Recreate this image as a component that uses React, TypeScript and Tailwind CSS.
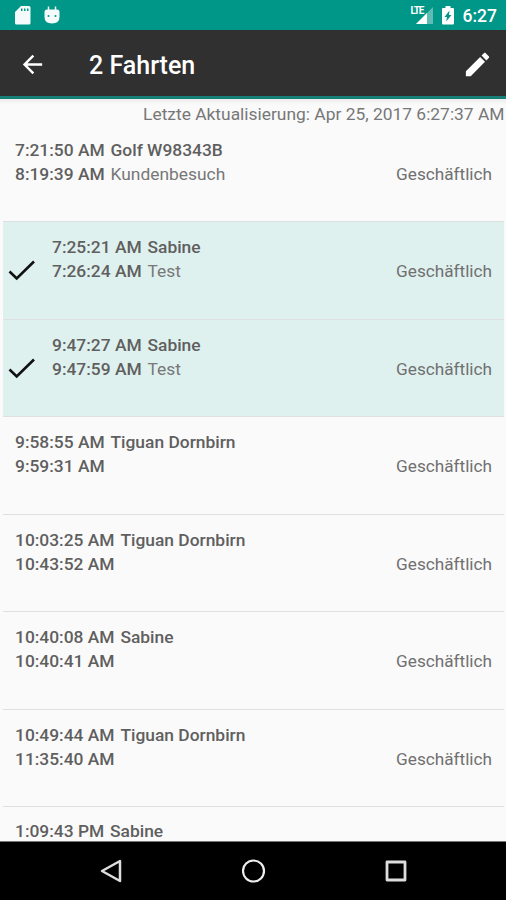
interface Trip {
  start: string;
  end?: string;
  vehicle: string;
  purpose?: string;
  selected?: boolean;
}

const trips: Trip[] = [
  { start: '7:21:50 AM', end: '8:19:39 AM', vehicle: 'Golf W98343B', purpose: 'Kundenbesuch' },
  { start: '7:25:21 AM', end: '7:26:24 AM', vehicle: 'Sabine', purpose: 'Test', selected: true },
  { start: '9:47:27 AM', end: '9:47:59 AM', vehicle: 'Sabine', purpose: 'Test', selected: true },
  { start: '9:58:55 AM', end: '9:59:31 AM', vehicle: 'Tiguan Dornbirn' },
  { start: '10:03:25 AM', end: '10:43:52 AM', vehicle: 'Tiguan Dornbirn' },
  { start: '10:40:08 AM', end: '10:40:41 AM', vehicle: 'Sabine' },
  { start: '10:49:44 AM', end: '11:35:40 AM', vehicle: 'Tiguan Dornbirn' },
];

function StatusBar() {
  return (
    <div className="flex h-[30px] shrink-0 items-center bg-[#009688] pr-[9px] pl-[15px] text-white">
      <svg className="mt-px h-[19px] w-4" viewBox="0 0 16 19" fill="#f4fbfa">
        <path
          fillRule="evenodd"
          d="M6 0H14a1.500 1.500 0 0 1 1.500 1.500V17a1.500 1.500 0 0 1-1.500 1.500H1.500A1.500 1.500 0 0 1 0 17V6Z M6 2.500V5H7.500V2.500Z M9 2.500V5H10.500V2.500Z M12 2.500V5H13.500V2.500Z"
        />
      </svg>
      <svg className="ml-[13px] h-[19px] w-4" viewBox="0 0 16 19">
        <path d="M4.500 0.500V5M11.500 0.500V5" stroke="#f4fbfa" strokeWidth="1.500" />
        <path d="M3 3.500H13Q15.500 3.500 15.500 6V11Q15.500 17.500 8 17.500Q.5 17.500 .5 11V6Q.5 3.500 3 3.500Z" fill="#f4fbfa" />
        <circle cx="4.500" cy="10" r="1" fill="#009688" />
        <circle cx="11.500" cy="10" r="1" fill="#009688" />
      </svg>
      <div className="ml-auto flex items-center">
        <div className="relative h-5 w-[23px]">
          <svg className="h-5 w-[23px]" viewBox="0 0 23 20">
            <path d="M22 2V19H5Z" fill="#5fbcb3" />
            <path d="M16 8V19H5Z" fill="#fff" />
            <path d="M0 0H13V10H0Z" fill="#009688" />
          </svg>
          <span className="absolute top-0 left-0 text-[10px] leading-[11px] font-bold tracking-[-1.2px]">LTE</span>
        </div>
        <svg className="ml-[8px] h-[19px] w-3" viewBox="0 0 12 19">
          <path d="M3.500 0H8.500V2H11Q12 2 12 3V17.500Q12 18.500 11 18.500H1Q0 18.500 0 17.500V3Q0 2 1 2H3.500Z" fill="#fff" />
          <path d="M7.500 4.500L2.500 11H5L4.200 15.500L9.500 9H7Z" fill="#009688" />
        </svg>
        <span className="ml-[9px] pt-px text-[17.5px] leading-5 font-medium">6:27</span>
      </div>
    </div>
  );
}

function AppBar() {
  return (
    <header className="flex h-[69px] shrink-0 items-center border-b-[3px] border-[#168078] bg-[#303030] pt-[2px] pr-[13px] pl-[18px] text-white">
      <svg className="h-[29px] w-[29px]" viewBox="0 0 24 24" fill="#fff">
        <path d="M20 11H7.830l5.590-5.590L12 4l-8 8 8 8 1.410-1.410L7.830 13H20v-2z" />
      </svg>
      <h1 className="ml-[42px] pt-[3px] text-[25px] leading-8 font-medium">2 Fahrten</h1>
      <svg className="ml-auto h-[31px] w-[31px]" viewBox="0 0 24 24" fill="#fff">
        <path d="M3 17.250V21h3.750L17.810 9.940l-3.750-3.750L3 17.250zM20.710 7.040c.39-.39.39-1.020 0-1.410l-2.340-2.340c-.39-.39-1.020-.39-1.410 0l-1.830 1.830 3.750 3.750 1.830-1.830z" />
      </svg>
    </header>
  );
}

function TripRow({ trip }: { trip: Trip }) {
  return (
    <li
      className={`flex h-[97.5px] shrink-0 border-b-[1.5px] border-[#dfe1e1] pt-[13px] pr-[12px] ${
        trip.selected ? 'bg-[#dff1ef]' : ''
      }`}
    >
      {trip.selected && (
        <svg className="mt-[21px] ml-[4px] h-[30px] w-[30px]" viewBox="0 0 30 30" fill="none" stroke="#111" strokeWidth="2.600">
          <path d="M2.500 15.500L9.700 22.500L27 5.500" />
        </svg>
      )}
      <div className={trip.selected ? 'ml-[15px]' : 'ml-[12px]'}>
        <p className="font-medium">
          {trip.start} <span className="ml-[1.5px]">{trip.vehicle}</span>
        </p>
        <p className="font-medium">
          {trip.end} <span className="ml-[1.5px] font-normal text-[#777]">{trip.purpose}</span>
        </p>
      </div>
      <span className="mt-6 ml-auto text-[17.2px] text-[#707070]">Geschäftlich</span>
    </li>
  );
}

function NavigationBar() {
  return (
    <nav className="flex h-[58px] shrink-0 items-center justify-between bg-black pr-[98px] pl-[99px]">
      <svg className="h-6 w-6" viewBox="0 0 24 24" fill="none" stroke="#ddd" strokeWidth="2.500" strokeLinejoin="round">
        <path d="M3 12L21 2V22Z" />
      </svg>
      <svg className="h-6 w-6" viewBox="0 0 24 24" fill="none" stroke="#eee" strokeWidth="2.200">
        <circle cx="11.500" cy="12" r="10.500" />
      </svg>
      <svg className="h-6 w-6" viewBox="0 0 24 24" fill="none" stroke="#ddd" strokeWidth="2.800" strokeLinejoin="round">
        <path d="M3 3H21V21H3Z" />
      </svg>
    </nav>
  );
}

export default function App() {
  return (
    <div className="flex h-[900px] w-[506px] flex-col overflow-hidden bg-[#fafafa] font-['Roboto',sans-serif] text-[17.4px] leading-6 text-[#5f5f5f]">
      <StatusBar />
      <AppBar />
      <main className="flex min-h-0 flex-1 flex-col border-b border-[#777] bg-linear-to-b from-[#ededed] to-[#fafafa] to-[6px]">
        <p className="h-[25.6px] shrink-0 pt-[3px] pr-[1.5px] text-right text-[#777]">
          Letzte Aktualisierung: Apr 25, 2017 6:27:37 AM
        </p>
        <ul className="mr-[2px] ml-[3px] flex min-h-0 flex-1 flex-col">
          {trips.map((trip) => (
            <TripRow key={trip.start} trip={trip} />
          ))}
          <li className="shrink-0 pt-[15.4px] pl-[12px] leading-[18px] font-medium">
            1:09:43 PM <span className="ml-[1.5px]">Sabine</span>
          </li>
        </ul>
      </main>
      <NavigationBar />
    </div>
  );
}
